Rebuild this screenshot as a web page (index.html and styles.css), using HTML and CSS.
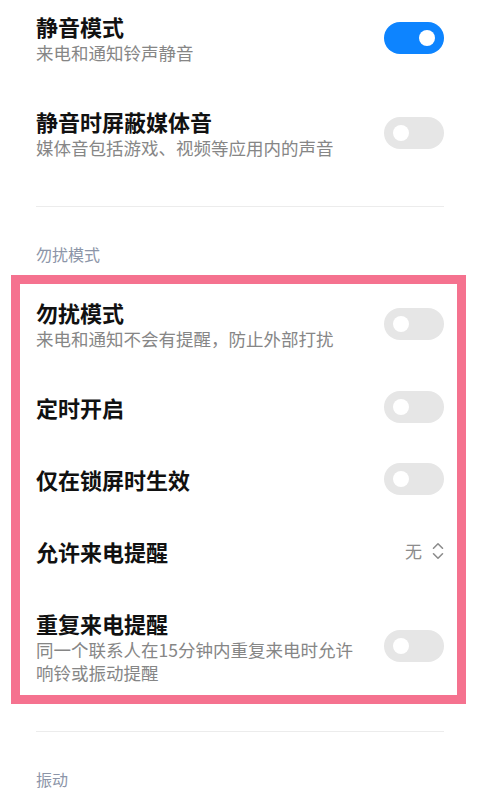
FILE: index.html
```html
<!DOCTYPE html>
<html lang="zh-CN">
<head>
<meta charset="utf-8">
<title>声音设置</title>
<link rel="stylesheet" href="styles.css">
</head>
<body>
<div class="screen">
  <div class="list">
    <div class="row two">
      <div class="text">
        <div class="title">静音模式</div>
        <div class="sub">来电和通知铃声静音</div>
      </div>
      <div class="toggle on"><span class="knob"></span></div>
    </div>
    <div class="row two">
      <div class="text">
        <div class="title">静音时屏蔽媒体音</div>
        <div class="sub">媒体音包括游戏、视频等应用内的声音</div>
      </div>
      <div class="toggle"><span class="knob"></span></div>
    </div>
    <div class="divider"></div>
    <div class="section">勿扰模式</div>
    <div class="row two">
      <div class="text">
        <div class="title">勿扰模式</div>
        <div class="sub">来电和通知不会有提醒，防止外部打扰</div>
      </div>
      <div class="toggle"><span class="knob"></span></div>
    </div>
    <div class="row">
      <div class="text"><div class="title">定时开启</div></div>
      <div class="toggle"><span class="knob"></span></div>
    </div>
    <div class="row">
      <div class="text"><div class="title">仅在锁屏时生效</div></div>
      <div class="toggle"><span class="knob"></span></div>
    </div>
    <div class="row">
      <div class="text"><div class="title">允许来电提醒</div></div>
      <div class="value">
        <span>无</span>
        <svg class="chev" width="12" height="18" viewBox="0 0 12 18" fill="none" stroke="#8c8c8c" stroke-width="1.6" stroke-linecap="round" stroke-linejoin="round"><path d="M1.5 6.2 L6 1.8 L10.5 6.2"/><path d="M1.5 11.8 L6 16.2 L10.5 11.8"/></svg>
      </div>
    </div>
    <div class="row">
      <div class="text narrow">
        <div class="title">重复来电提醒</div>
        <div class="sub">同一个联系人在15分钟内重复来电时允许响铃或振动提醒</div>
      </div>
      <div class="toggle"><span class="knob"></span></div>
    </div>
    <div class="divider"></div>
    <div class="section">振动</div>
  </div>
  <div class="highlight"></div>
</div>
</body>
</html>
```

FILE: styles.css
```css
html, body {
  margin: 0;
  padding: 0;
  background: #ffffff;
}
body {
  font-family: "Noto Sans CJK SC", "Noto Sans", "Liberation Sans", sans-serif;
  color: #111111;
}
.screen {
  position: relative;
  width: 480px;
  height: 807px;
  overflow: hidden;
}
.list {
  margin-top: -10px;
  padding: 0 36px;
}
.row {
  display: flex;
  align-items: center;
  justify-content: space-between;
  padding: 21px 0;
}
.text {
  display: flex;
  flex-direction: column;
}
.text.narrow {
  width: 326px;
}
.title {
  font-size: 22px;
  line-height: 30px;
  font-weight: 600;
  color: #111111;
}
.sub {
  font-size: 17.5px;
  line-height: 23px;
  color: #868686;
}
.toggle {
  flex: none;
  position: relative;
  width: 60px;
  height: 32px;
  margin: -2px 0;
  border-radius: 16px;
  background: #e6e6e6;
}
.toggle .knob {
  position: absolute;
  top: 8px;
  left: 9px;
  width: 16px;
  height: 16px;
  border-radius: 50%;
  background: #ffffff;
}
.toggle.on {
  background: #0d84ff;
}
.toggle.on .knob {
  left: 35px;
}
.value {
  display: flex;
  align-items: center;
  gap: 10px;
  font-size: 17px;
  color: #8c8c8c;
  line-height: 24px;
}
.chev {
  display: block;
}
.divider {
  height: 1px;
  background: #ececec;
  margin-top: 26px;
}
.section {
  margin-top: 36px;
  margin-bottom: 11px;
  font-size: 16px;
  line-height: 22px;
  color: #8c95a8;
}
.highlight {
  position: absolute;
  left: 11px;
  top: 275px;
  width: 437px;
  height: 411px;
  border: 9px solid #f5728f;
  pointer-events: none;
}
```
